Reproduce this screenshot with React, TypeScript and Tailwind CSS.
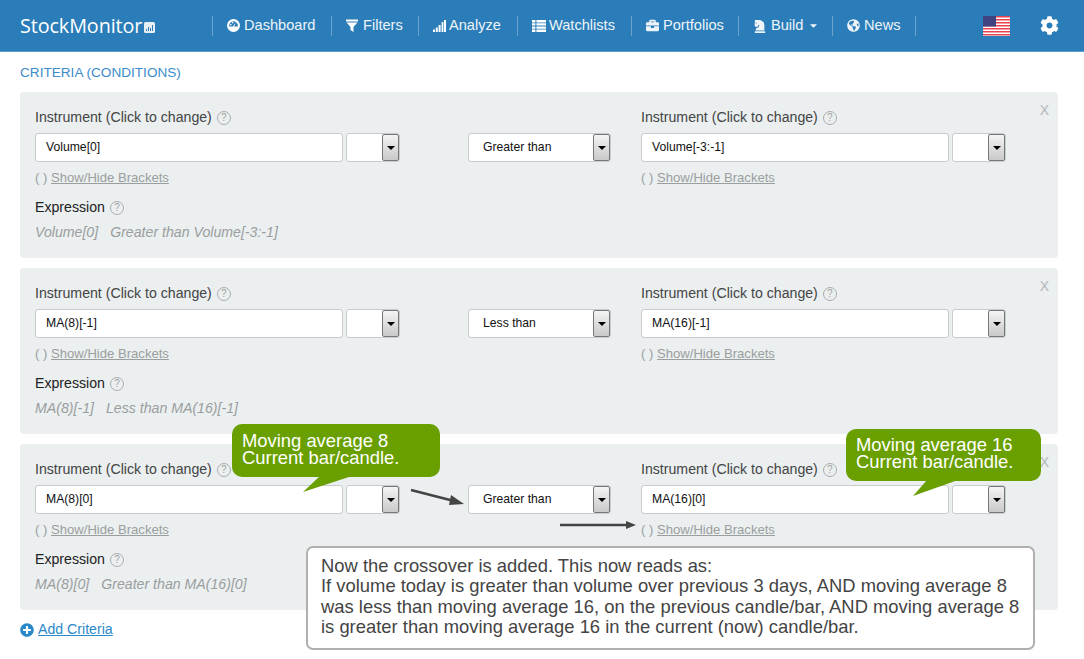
import React from 'react';
import {
  FaBriefcase,
  FaCaretDown,
  FaChessKnight,
  FaCog,
  FaGlobeAmericas,
  FaPlusCircle,
} from 'react-icons/fa';

const GaugeIcon = () => (
  <svg width="13" height="13" viewBox="0 0 13 13">
    <circle cx="6.5" cy="6.5" r="6.5" fill="#fff" />
    <path d="M2.2 7.6a4.4 4.4 0 1 1 8.6 0z" fill="#2a7db8" />
    <path d="M6 7.5L8.6 3.6L7.2 8z" fill="#fff" />
    <circle cx="3.8" cy="5.6" r="0.8" fill="#fff" />
    <circle cx="5.6" cy="3.6" r="0.8" fill="#fff" />
  </svg>
);

const FunnelIcon = () => (
  <svg width="12" height="13" viewBox="0 0 12 13">
    <path d="M0 0.5h12V2.5H0zM0.6 3.5h10.8L7.5 8V13L4.5 11V8z" fill="#fff" />
  </svg>
);

const BarsIcon = () => (
  <svg width="13" height="12" viewBox="0 0 13 12">
    <path d="M0 9.5h2V12H0zM2.8 7.5h2V12h-2zM5.6 5h2v7h-2zM8.6 2h1.8v10H8.6zM11 0h2v12h-2z" fill="#fff" />
  </svg>
);

const ListIcon = () => (
  <svg width="14" height="12" viewBox="0 0 14 12">
    <path d="M0 0h3.4v2.4H0zM4.4 0H14v2.4H4.4zM0 3.2h3.4v2.4H0zM4.4 3.2H14v2.4H4.4zM0 6.4h3.4v2.4H0zM4.4 6.4H14v2.4H4.4zM0 9.6h3.4V12H0zM4.4 9.6H14V12H4.4z" fill="#fff" />
  </svg>
);

const navItems = [
  { label: 'Dashboard', icon: <GaugeIcon />, width: 'w-[119px]', gap: 'gap-[4px]' },
  { label: 'Filters', icon: <FunnelIcon />, width: 'w-[87px]', gap: 'gap-[5px]' },
  { label: 'Analyze', icon: <BarsIcon />, width: 'w-[99px]', gap: 'gap-[3px]' },
  { label: 'Watchlists', icon: <ListIcon />, width: 'w-[114px]', gap: 'gap-[3px]' },
  { label: 'Portfolios', icon: <FaBriefcase size={13} />, width: 'w-[107px]', gap: 'gap-[4px]' },
  { label: 'Build', icon: <FaChessKnight size={14} />, width: 'w-[94px]', gap: 'gap-[4px]', caret: true },
  { label: 'News', icon: <FaGlobeAmericas size={13} />, width: 'w-[83px]', gap: 'gap-[4px]' },
];

const criteria = [
  { left: 'Volume[0]', op: 'Greater than', right: 'Volume[-3:-1]' },
  { left: 'MA(8)[-1]', op: 'Less than', right: 'MA(16)[-1]' },
  { left: 'MA(8)[0]', op: 'Greater than', right: 'MA(16)[0]' },
];

const Help = () => (
  <span className="ml-[5px] inline-flex h-[14px] w-[14px] items-center justify-center rounded-full border border-[#a9adad] text-[10px] leading-none text-[#a0a4a4]">
    ?
  </span>
);

// the old style select arrow box
const DropButton = () => (
  <div className="flex w-[17px] shrink-0 items-center justify-center self-stretch rounded-[2px] border border-[#777] bg-gradient-to-b from-[#f4f4f4] to-[#c9c9c9]">
    <span className="h-0 w-0 border-x-[4px] border-t-[4px] border-x-transparent border-t-black" />
  </div>
);

const Field = ({ value, className }: { value: string; className: string }) => (
  <div className={`flex h-[29px] items-center rounded-[3px] border border-[#c8cccc] bg-white pl-[10px] text-[12.2px] text-[#111] ${className}`}>
    {value}
  </div>
);

const SmallSelect = () => (
  <div className="ml-[3px] flex h-[29px] w-[54px] justify-end rounded-[3px] border border-[#c8cccc] bg-white">
    <DropButton />
  </div>
);

const Instrument = ({ value }: { value: string }) => (
  <div className="w-[365px]">
    <div className="flex h-[17px] items-center text-[14.15px] text-[#444]">
      Instrument (Click to change) <Help />
    </div>
    <div className="mt-[7px] flex">
      <Field value={value} className="w-[308px]" />
      <SmallSelect />
    </div>
    <div className="mt-[8px] h-[16px] text-[13.1px] leading-[16px] text-[#9a9e9e]">
      ( ) <span className="underline">Show/Hide Brackets</span>
    </div>
  </div>
);

const CriteriaCard = ({ left, op, right }: { left: string; op: string; right: string }) => (
  <div className="relative h-[166px] rounded-[4px] bg-[#ebeff0] pl-[15px] pt-[17px]">
    <span className="absolute right-[9px] top-[8px] text-[14px] text-[#b4b8b8]">X</span>
    <div className="flex">
      <Instrument value={left} />
      <div className="ml-[68px] mr-[30px] mt-[24px] flex h-[29px] w-[143px] items-center justify-between rounded-[3px] border border-[#c8cccc] bg-white pl-[14px] text-[12.2px] text-[#111]">
        {op}
        <DropButton />
      </div>
      <Instrument value={right} />
    </div>
    <div className="mt-[13px] flex h-[17px] items-center text-[14.15px] text-[#222]">
      Expression <Help />
    </div>
    <div className="mt-[6px] text-[14.15px] italic text-[#9a9e9e]">
      {left}
      <span className="ml-[12px]">{op} {right}</span>
    </div>
  </div>
);

const Callout = ({ lines, className, tail }: { lines: string[]; className: string; tail: React.ReactNode }) => (
  <div className={`absolute rounded-[10px] bg-[#6a9f00] px-[10px] text-[18.4px] leading-[17px] text-white ${className}`}>
    {lines.map((l) => (
      <div key={l}>{l}</div>
    ))}
    {tail}
  </div>
);

export default function App() {
  return (
    <div className="relative h-[659px] w-[1084px] overflow-hidden bg-white font-['Liberation_Sans',Arial,sans-serif]">
      <header className="flex h-[52px] items-center border-b border-[#5b9bd0] bg-[#2a7db8] text-white">
        <div className="ml-[20px] flex w-[192px] items-center font-['Open_Sans',sans-serif] text-[19.8px] font-medium tracking-[-0.1px]">
          StockMonitor
          <svg width="11" height="11" viewBox="0 0 11 11" className="ml-[2px] mt-[3px]">
            <rect width="11" height="11" rx="1.5" fill="#e8f0f6" />
            <path d="M2 9V7h1v2zM4 9V5h1v4zM6 9V6h1v3zM8 9V3h1v6z" fill="#2a7db8" />
          </svg>
        </div>
        {navItems.map((item) => (
          <div
            key={item.label}
            className={`flex h-[20px] items-center border-l border-[#6ba3cf] pl-[14px] text-[14.6px] text-[#eef4f9] ${item.gap} ${item.width}`}
          >
            {item.icon}
            {item.label}
            {item.caret && <FaCaretDown size={11} className="ml-[1px]" />}
          </div>
        ))}
        <div className="h-[20px] border-l border-[#6ba3cf]" />
        <svg width="27" height="20" viewBox="0 0 27 20" className="ml-[67px]">
          <rect width="27" height="20" fill="#fff" />
          <path d="M0 0h27v1.6H0zM0 3h27v1.6H0zM0 6h27v1.6H0zM0 9h27v1.6H0zM0 12h27v1.6H0zM0 15h27v1.6H0zM0 18h27v1.6H0z" fill="#e8404c" />
          <rect width="13" height="10.5" fill="#3f4380" />
        </svg>
        <FaCog size={19} className="ml-[30px]" />
      </header>

      <main className="px-[20px] pt-[13px]">
        <h2 className="h-[16px] text-[13.6px] font-normal leading-[16px] text-[#3d8ccb]">CRITERIA (CONDITIONS)</h2>
        <div className="mt-[11px] flex w-[1038px] flex-col gap-[10px]">
          {criteria.map((c) => (
            <CriteriaCard key={c.left + c.right} {...c} />
          ))}
        </div>
        <div className="mt-[9px] flex items-center text-[14.15px] text-[#2a88c8]">
          <FaPlusCircle size={14} />
          <span className="ml-[4px] underline">Add Criteria</span>
        </div>
      </main>

      <Callout
        lines={['Moving average 8', 'Current bar/candle.']}
        className="left-[232px] top-[424px] h-[53px] w-[208px] pt-[8px]"
        tail={
          <svg width="56" height="18" viewBox="0 0 56 18" className="absolute left-[70px] top-[52px]">
            <path d="M18 0L1 16L50 0Z" fill="#6a9f00" />
          </svg>
        }
      />
      <Callout
        lines={['Moving average 16', 'Current bar/candle.']}
        className="left-[846px] top-[429px] h-[52px] w-[195px] pt-[7px]"
        tail={
          <svg width="56" height="18" viewBox="0 0 56 18" className="absolute left-[66px] top-[51px]">
            <path d="M15 0L1 16L46 0Z" fill="#6a9f00" />
          </svg>
        }
      />

      {/* arrows on top of the form */}
      <svg width="60" height="24" viewBox="0 0 60 24" className="absolute left-[410px] top-[487px]">
        <path d="M1 3L44 14" stroke="#444" strokeWidth="2.6" />
        <path d="M54 17L41 8L39 18Z" fill="#444" />
      </svg>
      <svg width="78" height="10" viewBox="0 0 78 10" className="absolute left-[560px] top-[520px]">
        <path d="M0 5H68" stroke="#444" strokeWidth="2.6" />
        <path d="M76 5L66 1V9Z" fill="#444" />
      </svg>

      <div className="absolute left-[306px] top-[546px] h-[104px] w-[729px] rounded-[7px] border-2 border-[#b0b0b0] bg-white pl-[13px] pt-[8px] text-[18.4px] leading-[20.3px] text-[#444]">
        <div>Now the crossover is added. This now reads as:</div>
        <div>If volume today is greater than volume over previous 3 days, AND moving average 8</div>
        <div>was less than moving average 16, on the previous candle/bar, AND moving average 8</div>
        <div>is greater than moving average 16 in the current (now) candle/bar.</div>
      </div>
    </div>
  );
}
